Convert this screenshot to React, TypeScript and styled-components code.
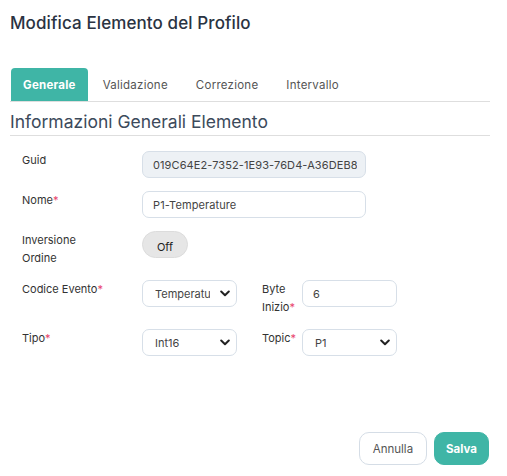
import React from "react";
import styled, { createGlobalStyle } from "styled-components";

const Global = createGlobalStyle`
  html, body { margin: 0; padding: 0; background: #fff; }
  body { font-family: "Inter", "Open Sans", sans-serif; color: #333; }
  * { box-sizing: border-box; }
`;

const teal = "#3fb5a6";

const Page = styled.div`
  width: 507px;
  height: 476px;
  padding: 0 17px 0 10px;
  display: flex;
  flex-direction: column;
`;

const Title = styled.h1`
  margin: 12px 0 0;
  font-size: 17px;
  font-weight: 500;
  color: #2a3342;
  line-height: 22px;
  letter-spacing: 0.1px;
`;

const Tabs = styled.div`
  margin-top: 34px;
  display: flex;
  border-bottom: 1px solid #dedede;
  padding-left: 1px;
`;

const Tab = styled.div<{ $active?: boolean }>`
  height: 33px;
  padding: 0 ${(p) => (p.$active ? 12 : 14)}px;
  display: flex;
  align-items: center;
  font-size: 11.5px;
  letter-spacing: 0.25px;
  font-weight: ${(p) => (p.$active ? 700 : 400)};
  color: ${(p) => (p.$active ? "#fff" : "#555")};
  background: ${(p) => (p.$active ? teal : "transparent")};
  border-radius: 4px 4px 0 0;
  margin-right: ${(p) => (p.$active ? "1px" : "0")};
`;

const Section = styled.h2`
  margin: 8px 0 0;
  font-size: 17.5px;
  font-weight: 400;
  color: #3c4a5b;
  line-height: 24px;
  padding-bottom: 1px;
  border-bottom: 1px solid #dedede;
`;

const Form = styled.div`
  padding: 15px 0 0 12px;
  display: flex;
  flex-direction: column;
  gap: 13px;
`;

const Row = styled.div`
  display: flex;
  align-items: flex-start;
`;

const Label = styled.div<{ $w?: number }>`
  width: ${(p) => p.$w ?? 120}px;
  flex-shrink: 0;
  font-size: 11px;
  line-height: 18px;
  color: #333;
`;

const Req = styled.span`
  color: #e8436a;
`;

const Input = styled.input<{ $w: number; $disabled?: boolean }>`
  width: ${(p) => p.$w}px;
  height: 27px;
  border: 1px solid #d7dfe8;
  border-radius: 7px;
  padding: 0 8px 0 10px;
  font-family: inherit;
  font-size: 11px;
  color: #444;
  background: ${(p) => (p.$disabled ? "#edf1f5" : "#fff")};
  outline: none;
  letter-spacing: 0.1px;
`;

const SelectWrap = styled.div<{ $w: number; $mr?: number }>`
  position: relative;
  width: ${(p) => p.$w}px;
  margin-right: ${(p) => p.$mr ?? 0}px;
  flex-shrink: 0;
`;

const Select = styled.select`
  appearance: none;
  width: 100%;
  height: 27px;
  border: 1px solid #d7dfe8;
  border-radius: 7px;
  padding: 0 26px 0 12px;
  font-family: inherit;
  font-size: 11px;
  color: #444;
  background: #fff;
  outline: none;
`;

const Chevron = styled.svg`
  position: absolute;
  right: 7px;
  top: 10px;
  width: 10px;
  height: 7px;
  pointer-events: none;
`;

const Toggle = styled.button`
  width: 46px;
  height: 27px;
  border-radius: 14px;
  border: 1px solid #dcdcdc;
  background: #e6e6e6;
  font-family: inherit;
  font-size: 11px;
  color: #222;
  padding: 4px 0 0;
`;

const Footer = styled.div`
  margin-top: auto;
  margin-bottom: 11px;
  display: flex;
  justify-content: flex-end;
  gap: 7px;
  padding-right: 1px;
`;

const Button = styled.button<{ $primary?: boolean }>`
  height: 33px;
  padding: 0 ${(p) => (p.$primary ? 11 : 13)}px;
  border-radius: 10px;
  font-family: inherit;
  font-size: 11.5px;
  font-weight: ${(p) => (p.$primary ? 700 : 400)};
  color: ${(p) => (p.$primary ? "#fff" : "#555")};
  background: ${(p) => (p.$primary ? teal : "#fff")};
  border: 1px solid ${(p) => (p.$primary ? teal : "#d5dde6")};
`;

const Sel = ({ w, value, mr }: { w: number; value: string; mr?: number }) => (
  <SelectWrap $w={w} $mr={mr}>
    <Select defaultValue={value}>
      <option>{value}</option>
    </Select>
    <Chevron viewBox="0 0 10 7">
      <path d="M1.2 1.5 L5 5.2 L8.8 1.5" fill="none" stroke="#222" strokeWidth="2" strokeLinecap="round" strokeLinejoin="round" />
    </Chevron>
  </SelectWrap>
);

export default function App() {
  return (
    <Page>
      <Global />
      <Title>Modifica Elemento del Profilo</Title>
      <Tabs>
        <Tab $active>Generale</Tab>
        <Tab>Validazione</Tab>
        <Tab>Correzione</Tab>
        <Tab>Intervallo</Tab>
      </Tabs>
      <Section>Informazioni Generali Elemento</Section>
      <Form>
        <Row>
          <Label>Guid</Label>
          <Input $w={224} $disabled readOnly defaultValue="019C64E2-7352-1E93-76D4-A36DEB8" />
        </Row>
        <Row>
          <Label>Nome<Req>*</Req></Label>
          <Input $w={224} defaultValue="P1-Temperature" />
        </Row>
        <Row>
          <Label>Inversione<br />Ordine</Label>
          <Toggle>Off</Toggle>
        </Row>
        <Row>
          <Label>Codice Evento<Req>*</Req></Label>
          <Sel w={95} value="Temperature" mr={25} />
          <Label $w={40}>Byte<br />Inizio<Req>*</Req></Label>
          <Input $w={95} defaultValue="6" />
        </Row>
        <Row>
          <Label>Tipo<Req>*</Req></Label>
          <Sel w={95} value="Int16" mr={25} />
          <Label $w={40}>Topic<Req>*</Req></Label>
          <Sel w={95} value="P1" />
        </Row>
      </Form>
      <Footer>
        <Button>Annulla</Button>
        <Button $primary>Salva</Button>
      </Footer>
    </Page>
  );
}
